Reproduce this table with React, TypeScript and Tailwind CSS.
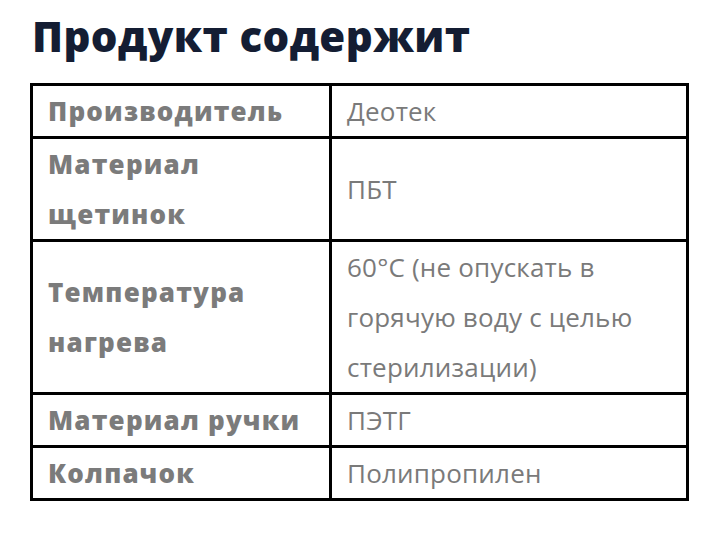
const rows: { label: string[]; value: string[] }[] = [
  { label: ['Производитель'], value: ['Деотек'] },
  { label: ['Материал', 'щетинок'], value: ['ПБТ'] },
  { label: ['Температура', 'нагрева'], value: ['60°С (не опускать в', 'горячую воду с целью', 'стерилизации)'] },
  { label: ['Материал ручки'], value: ['ПЭТГ'] },
  { label: ['Колпачок'], value: ['Полипропилен'] },
]

export default function App() {
  return (
    <div className="h-[538px] w-[720px] bg-white pl-[30px] pt-[10px]" style={{ fontFamily: '"Open Sans", Lato, sans-serif' }}>
      <h1 className="pl-[2px] text-[42px] font-extrabold leading-[52px] tracking-[0.4px] text-[#141d33]">Продукт содержит</h1>
      <table className="mt-[21px] w-[659px] table-fixed border-collapse border-[3px] border-black text-[26px] leading-[50px] text-[#7a7a7a]">
        <colgroup>
          <col className="w-[299px]" />
          <col />
        </colgroup>
        <tbody>
          {rows.map((r) => (
            <tr key={r.label.join(' ')}>
              <td className="whitespace-nowrap border-[3px] border-black px-[15px] align-middle font-extrabold tracking-[1.2px] text-[#7b7b7b]">
                {r.label.map((l) => (
                  <div key={l}>{l}</div>
                ))}
              </td>
              <td className="whitespace-nowrap border-[3px] border-black px-[15px] align-middle tracking-[0.2px]">
                {r.value.map((v) => (
                  <div key={v}>{v}</div>
                ))}
              </td>
            </tr>
          ))}
        </tbody>
      </table>
    </div>
  )
}
